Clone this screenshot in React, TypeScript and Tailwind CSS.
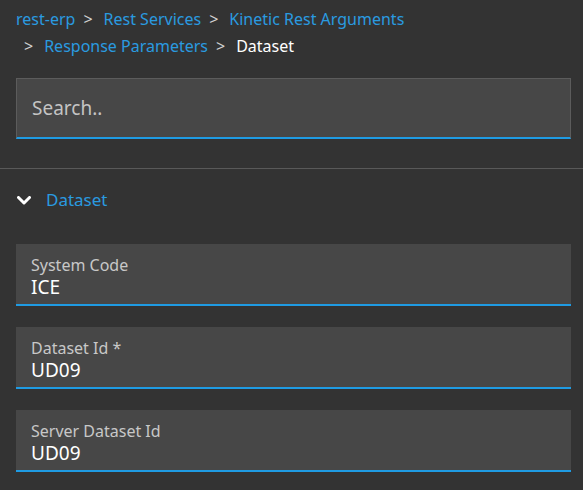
import React from 'react';

const crumbs = ['Rest Services', 'Kinetic Rest Arguments', 'Response Parameters'];

const fields = [
  { label: 'System Code', value: 'ICE' },
  { label: 'Dataset Id *', value: 'UD09' },
  { label: 'Server Dataset Id', value: 'UD09' },
];

const Field = ({ label, value }: { label: string; value: string }) => (
  <div className="h-[62px] bg-[#474747] border-b-2 border-[#1f9be3] px-[15px] pt-[11px]">
    <div className="text-[16px] leading-[20px] text-[#c8c8c8]">{label}</div>
    <div className="text-[19px] leading-[24px] text-white">{value}</div>
  </div>
);

const Sep = () => <span className="pl-[8px] pr-[11px] text-[#d0d0d0]">&gt;</span>;

const App = () => {
  return (
    <div
      className="min-h-[490px] w-[583px] bg-[#333333] pt-[6px]"
      style={{ fontFamily: '"Noto Sans", "Open Sans", sans-serif' }}
    >
      {/* breadcrumb */}
      <nav className="flex flex-wrap pl-4 pr-3 text-[16px] leading-[27px]">
        <a className="text-[#2a9be0]">rest-erp</a>
        {crumbs.map((c) => (
          <span key={c} className="flex">
            <Sep />
            <a className="text-[#2a9be0]">{c}</a>
          </span>
        ))}
        <span className="flex">
          <Sep />
          <span className="text-white">Dataset</span>
        </span>
      </nav>

      {/* search */}
      <div className="pl-4 pr-3 pt-[18px]">
        <div className="h-[61px] flex items-center bg-[#474747] border border-[#5c5c5c] border-b-2 border-b-[#1f9be3] px-[15px]">
          <span className="text-[19px] text-[#c4c4c4]">Search..</span>
        </div>
      </div>

      <div className="mt-[29px] h-px bg-[#595959]" />

      {/* section header */}
      <div className="flex items-center pl-[17px] pr-3 pt-[20px] pb-[33px]">
        <svg width="14" height="9" viewBox="0 0 14 9" className="shrink-0">
          <polyline points="1.5,1.5 7,7 12.5,1.5" fill="none" stroke="#ffffff" strokeWidth="3" strokeLinecap="round" strokeLinejoin="round" />
        </svg>
        <span className="ml-[15px] text-[17px] leading-[22px] text-[#2a9be0]">Dataset</span>
      </div>

      <div className="flex flex-col gap-[21px] pl-4 pr-3 pb-[18px]">
        {fields.map((f) => (
          <Field key={f.label} label={f.label} value={f.value} />
        ))}
      </div>
    </div>
  );
};

export default App;
